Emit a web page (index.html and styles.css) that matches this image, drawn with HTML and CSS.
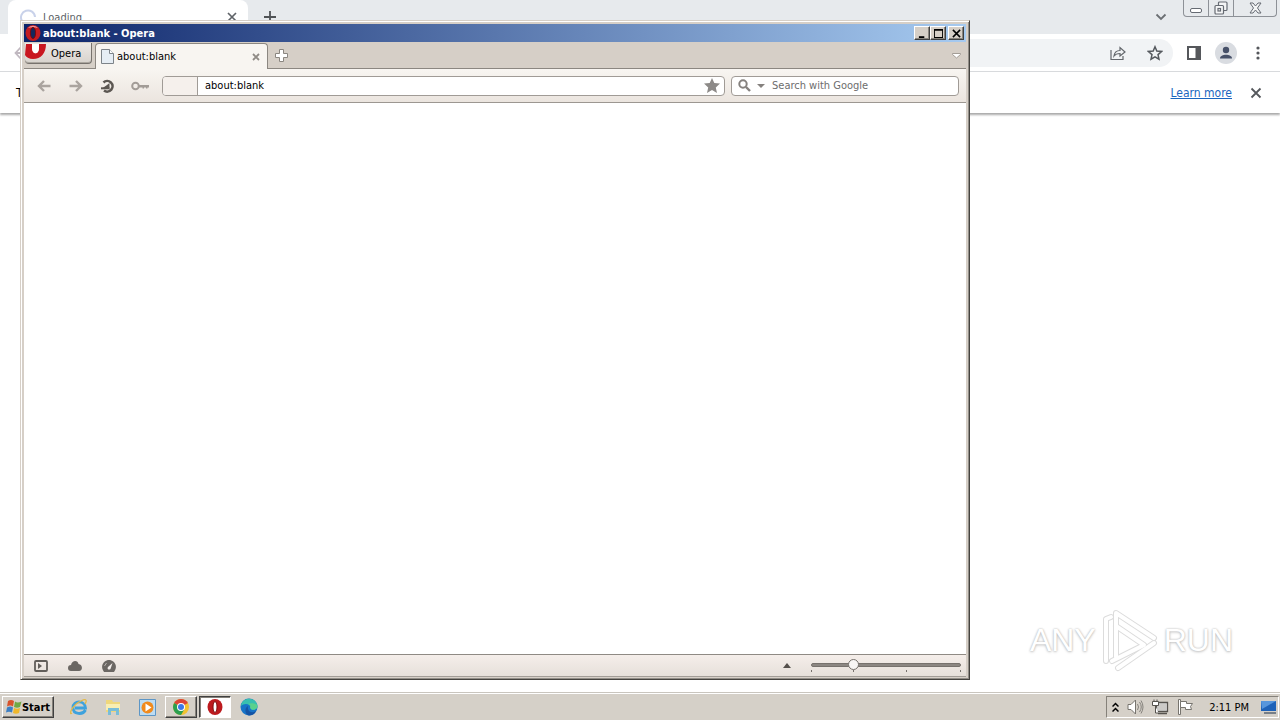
FILE: index.html
```html
<!DOCTYPE html>
<html lang="en">
<head>
<meta charset="utf-8">
<title>Desktop</title>
<link rel="stylesheet" href="styles.css">
</head>
<body>
<div class="screen">
  <main class="desktop">
    <section class="browser" aria-label="Browser">
      <header class="tabstrip">
        <div class="btab">
          <svg class="spinner" width="16" height="16" viewBox="0 0 16 16"><path d="M2 12A7 7 0 1 1 15 8" fill="none" stroke="#c9d2ea" stroke-width="2"/></svg>
          <span class="btab-title">Loading</span>
          <button class="plain" aria-label="Close tab"><svg width="10" height="10" viewBox="0 0 10 10"><path d="M1 1l8 8M9 1L1 9" stroke="#5f6368" stroke-width="1.7"/></svg></button>
        </div>
        <button class="plain newtab" aria-label="New tab"><svg width="12" height="12" viewBox="0 0 12 12"><path d="M6 0v12M0 6h12" stroke="#505356" stroke-width="1.8"/></svg></button>
        <button class="plain tabsearch" aria-label="Search tabs"><svg width="12" height="8" viewBox="0 0 12 8"><path d="M1.500 1.500L6 6l4.500-4.500" fill="none" stroke="#6b6f73" stroke-width="1.8"/></svg></button>
        <div class="wincontrols">
          <button aria-label="Minimize window"><svg width="14" height="14" viewBox="0 0 14 14"><rect x="1.500" y="7.500" width="11" height="4" rx="1.500" fill="#fff" stroke="#666b73"/></svg></button>
          <button aria-label="Restore window"><svg width="14" height="14" viewBox="0 0 14 14"><g fill="#f4f5f6" stroke="#666b73" stroke-width="1.200"><rect x="4.500" y="1" width="8.500" height="8.500" rx="1"/><rect x="1" y="4.500" width="8.500" height="8.500" rx="1"/><rect x="4" y="7.500" width="2.500" height="2.500"/></g></svg></button>
          <button class="wide" aria-label="Close window"><svg width="13" height="12" viewBox="0 0 13 12"><path d="M1 1h3l2.500 3L9 1h3L8.500 6l3.500 5H9L6.500 8 4 11H1l3.500-5z" fill="#f4f5f6" stroke="#666b73"/></svg></button>
        </div>
      </header>
      <div class="btoolbar">
        <button class="plain back" aria-label="Back"><svg width="14" height="14" viewBox="0 0 14 14"><path d="M13 7H2M7 1L1.500 7 7 13" fill="none" stroke="#c0b8c0" stroke-width="1.800"/></svg></button>
        <div class="omnibox">
          <button class="plain" aria-label="Share"><svg width="16" height="16" viewBox="0 0 16 16"><path d="M1 5v9.500h12V11M4 11c.5-4 3-5.500 6-5.500V2.500L15 7l-5 4V8.500c-3 0-4.500.5-6 2.500z" fill="none" stroke="#63676c" stroke-width="1.200"/></svg></button>
          <button class="plain" aria-label="Bookmark"><svg width="16" height="16" viewBox="0 0 16 16"><path d="M8 1.800l1.800 4.300 4.700.4-3.500 3.100 1 4.600L8 11.800l-4 2.400 1-4.600L1.500 6.500l4.700-.4z" fill="none" stroke="#55595e" stroke-width="1.500"/></svg></button>
        </div>
        <button class="plain" aria-label="Side panel"><svg width="14" height="14" viewBox="0 0 14 14"><path d="M0 0h14v14H0zM2 2v10h6.500V2z" fill="#55575b" fill-rule="evenodd"/></svg></button>
        <button class="plain" aria-label="Profile"><svg width="22" height="22" viewBox="0 0 22 22"><circle cx="11" cy="11" r="11" fill="#d9dce1"/><circle cx="11" cy="8" r="3.200" fill="#475169"/><path d="M5 16.500c0-5 12-5 12 0z" fill="#475169"/></svg></button>
        <button class="plain" aria-label="Menu"><svg width="4" height="14" viewBox="0 0 4 14"><g fill="#55575b"><circle cx="2" cy="2" r="1.600"/><circle cx="2" cy="7" r="1.600"/><circle cx="2" cy="12" r="1.600"/></g></svg></button>
      </div>
      <div class="infobar">
        <span class="infotext">T</span>
        <a class="learn" href="#">Learn more</a>
        <button class="plain" aria-label="Dismiss"><svg width="12" height="12" viewBox="0 0 12 12"><path d="M1.500 1.500l9 9M10.500 1.500l-9 9" stroke="#55585c" stroke-width="1.800"/></svg></button>
      </div>
      <div class="page"></div>
    </section>

    <section class="opera" aria-label="Opera">
      <header class="titlebar">
        <svg width="16" height="16" viewBox="0 0 16 16"><ellipse cx="8" cy="8" rx="7.500" ry="8" fill="#c41d22"/><path d="M3 3c3-3 7-3 10 0-3-1-7-1-10 0z" fill="#ef9999"/><ellipse cx="8" cy="8" rx="2.600" ry="5.600" fill="#14285c" stroke="#7c090d"/></svg>
        <h1 class="title">about:blank - Opera</h1>
        <button class="cap" aria-label="Minimize"><svg width="10" height="10" viewBox="0 0 10 10"><path d="M1 8h6v2H1z"/></svg></button>
        <button class="cap" aria-label="Maximize"><svg width="10" height="10" viewBox="0 0 10 10"><path d="M0 0h10v10H0zM1 2v7h8V2z" fill-rule="evenodd"/></svg></button>
        <button class="cap cap-close" aria-label="Close"><svg width="10" height="10" viewBox="0 0 10 10"><path d="M1 1l8 8M9 1L1 9" stroke="#000" stroke-width="1.700"/></svg></button>
      </header>
      <nav class="optabs">
        <button class="menu"><svg width="22" height="17" viewBox="0 0 22 17"><path d="M1 1h6v4c0 7 7 7 7 0V1h7C21 10 16 16 8 16 4 16 1 14 0 12z" fill="#c91720"/><path d="M7 1h7v4c0 7-7 7-7 0z" fill="#fff"/></svg><span>Opera</span></button>
        <div class="optab">
          <svg width="13" height="15" viewBox="0 0 13 15"><path d="M.5.500h8l4 4v10H.5z" fill="#e6edf4" stroke="#7d8389"/><path d="M8.500.500v4h4" fill="#fff" stroke="#7d8389"/></svg>
          <span class="optab-title">about:blank</span>
          <button class="plain" aria-label="Close tab"><svg width="8" height="8" viewBox="0 0 8 8"><path d="M1 1l6 6M7 1L1 7" stroke="#908b86" stroke-width="1.800"/></svg></button>
        </div>
        <button class="plain opnew" aria-label="New tab"><svg width="13" height="13" viewBox="0 0 13 13"><path d="M4.500.500h4v4h4v4h-4v4h-4v-4h-4v-4h4z" fill="#fff" stroke="#8b8680"/></svg></button>
        <button class="plain closed" aria-label="Closed tabs"><svg width="9" height="7" viewBox="0 0 9 7"><path d="M.5 1.500h8v1l-4 3.500-4-3.500z" fill="#fff" stroke="#a39d96"/></svg></button>
      </nav>
      <div class="optoolbar">
        <button class="plain tool" aria-label="Back"><svg width="14" height="12" viewBox="0 0 14 12"><path d="M13.500 6H2M7 1L2 6l5 5" fill="none" stroke="#aaa49f" stroke-width="2.400"/></svg></button>
        <button class="plain tool" aria-label="Forward"><svg width="14" height="12" viewBox="0 0 14 12"><path d="M.5 6H12M7 1l5 5-5 5" fill="none" stroke="#aaa49f" stroke-width="2.400"/></svg></button>
        <button class="plain tool" aria-label="Reload"><svg width="14" height="14" viewBox="0 0 14 14"><path d="M2.500 3.500A5.300 5.300 0 1 1 3 11.500" fill="none" stroke="#5c5752" stroke-width="2.600"/><path d="M1 9.500h7.500V4L6 6z" fill="#5c5752"/><path d="M0 8.300h8.500v2H0z" fill="#5c5752"/></svg></button>
        <button class="plain tool" aria-label="Wand"><svg width="18" height="10" viewBox="0 0 18 10"><circle cx="4.500" cy="5" r="3.300" fill="none" stroke="#a29c97" stroke-width="2"/><path d="M8 4h10v2.500h-1.500V7.500H15V6.500h-2v1h-1.500v-1H8z" fill="#a29c97"/></svg></button>
        <div class="address">
          <span class="badge"></span>
          <input class="field" type="text" aria-label="Address" value="about:blank">
          <button class="plain" aria-label="Bookmark page"><svg width="16" height="15" viewBox="0 0 16 15"><path d="M8 0l2.300 5 5.700.6-4.200 3.800L13 15l-5-2.900L3 15l1.200-5.600L0 5.600 5.700 5z" fill="#8d8a88"/></svg></button>
        </div>
        <div class="search">
          <button class="plain" aria-label="Search engine"><svg width="27" height="13" viewBox="0 0 27 13"><circle cx="5" cy="5" r="3.700" fill="none" stroke="#85817e" stroke-width="2"/><path d="M8 8l4 4" stroke="#85817e" stroke-width="2.400"/><path d="M19 5h8l-4 4z" fill="#85817e"/></svg></button>
          <input class="field" type="text" aria-label="Search" placeholder="Search with Google">
        </div>
      </div>
      <div class="opview"></div>
      <footer class="status">
        <button class="plain" aria-label="Panels"><svg width="14" height="12" viewBox="0 0 14 12"><rect x="1" y="1" width="12" height="10" rx="1" fill="none" stroke="#625e5a" stroke-width="1.800"/><path d="M4 3l4 3-4 3z" fill="#625e5a"/></svg></button>
        <button class="plain" aria-label="Opera Link"><svg width="14" height="10" viewBox="0 0 14 10"><path d="M3 10a3 3 0 0 1 0-6c1-5 7-5 7.500-1C15 3.500 15 10 11 10z" fill="#6b6763"/></svg></button>
        <button class="plain" aria-label="Opera Turbo"><svg width="14" height="12" viewBox="0 0 14 12"><path d="M2 12C-3 5 3 0 7 0s10 5 5 12z" fill="#6b6763"/><path d="M10.500 3L8.500 9C7 10.500 4.500 9 6 7z" fill="#f3eeeb"/><path d="M2.500 6l2-3" stroke="#b9b4b0"/></svg></button>
        <button class="plain viewmenu" aria-label="View options"><svg width="8" height="5" viewBox="0 0 8 5"><path d="M0 5l4-5 4 5z" fill="#55504c"/></svg></button>
        <div class="zoom">
          <input class="range" type="range" aria-label="Zoom" min="0" max="100" value="26">
          <div class="ticks"><i></i><i></i><i></i><i></i></div>
        </div>
      </footer>
    </section>

    <div class="mark">
      <span>ANY</span>
      <svg width="60" height="66" viewBox="0 0 60 66"><g fill="none" stroke-linejoin="round" stroke-linecap="round"><g stroke="#dcdcdc" stroke-width="6"><path d="M6 54V12l5-2"/><path d="M16 50V6l38 25"/><path d="M16 19l28 19L12 54"/><path d="M18 61l36-25"/></g><g stroke="#fff" stroke-width="4"><path d="M6 54V12l5-2"/><path d="M16 50V6l38 25"/><path d="M16 19l28 19L12 54"/><path d="M18 61l36-25"/></g></g></svg>
      <span>RUN</span>
    </div>
  </main>

  <footer class="taskbar">
    <button class="start"><svg width="16" height="16" viewBox="0 0 16 16"><path d="M2 2c2-1.500 4-1.500 6 0L7 7.500c-2-1.500-4-1-6 0z" fill="#d8532b"/><path d="M9 2.500c2 1.500 4 1 6.500 0L14 8c-2 1-4 1-6 0z" fill="#6fa944"/><path d="M1 8.500c2-1 4-1.500 6 0l-1 5c-2-1-4-1-6 0z" fill="#3c7fc4"/><path d="M8 9c2 1 4 1 6 0l-1 5c-2 1-4 1-6 0z" fill="#efb72b"/></svg>Start</button>
    <button class="task first" aria-label="Internet Explorer"><svg width="18" height="18" viewBox="0 0 18 18"><path d="M15.500 12C13 17 3 17 3 9.500S15 2 15.500 10H5" fill="none" stroke="#3ea2dd" stroke-width="2.800"/><path d="M2 15C-2 18 2 7 11 3c6-3 6 0 4 3" fill="none" stroke="#e3b948" stroke-width="1.300"/></svg></button>
    <button class="task" aria-label="Explorer"><svg width="18" height="18" viewBox="0 0 18 18"><path d="M2 2h6l1 2h7v10H2z" fill="#efd77c"/><path d="M2 6h14v6H2z" fill="#f9eeb2"/><path d="M4 10h11v7h-3v-4H7v4H4z" fill="#79bdd8"/></svg></button>
    <button class="task" aria-label="Media Player"><svg width="17" height="17" viewBox="0 0 17 17"><path d="M.5.500h16v16H.5z" fill="#bddcf2" stroke="#5d96c6"/><circle cx="8.500" cy="8.500" r="6" fill="#f18a1c"/><path d="M6.500 4.500l6 4-6 4z" fill="#fff"/></svg></button>
    <button class="task raised" aria-label="Chrome"><svg width="16" height="16" viewBox="0 0 16 16"><circle cx="8" cy="8" r="8" fill="#f2c230"/><path d="M8 8L1.100 4A8 8 0 0 1 14.900 4z" fill="#dc4437"/><path d="M8 8L1.100 4A8 8 0 0 0 8 16l3-5z" fill="#2c9f50"/><circle cx="8" cy="8" r="4" fill="#fff"/><circle cx="8" cy="8" r="3" fill="#3c78e7"/></svg></button>
    <button class="task pressed" aria-label="Opera"><svg width="16" height="16" viewBox="0 0 16 16"><ellipse cx="8" cy="8" rx="7.500" ry="8" fill="#bd1a1e"/><ellipse cx="8" cy="8" rx="2" ry="5.500" fill="#fff" stroke="#7d0c0e"/></svg></button>
    <button class="task" aria-label="Edge"><svg width="18" height="18" viewBox="0 0 18 18"><circle cx="9" cy="9" r="8.500" fill="#1673c7"/><path d="M1 8C2-2 17-1 17.500 8c0 5-7 5-7 2 0-5-7-5-9.500-2z" fill="#38bfb0"/><path d="M8 8c-1 5 3 8 8 5-1 3-4 4.500-7 4.500C5 17 4 10 8 8z" fill="#1553a4"/><path d="M10 9c1-1 0-3-2-3 4-2 9 0 9.500 2 0 4-7 5-7.500 1z" fill="#5ad18d"/></svg></button>
    <div class="tray">
      <svg width="7" height="11" viewBox="0 0 7 11"><path d="M.5 4.500l3-3 3 3M.5 9.500l3-3 3 3" fill="none" stroke="#000" stroke-width="1.500"/></svg>
      <svg width="17" height="16" viewBox="0 0 17 16"><path d="M1 5.500h3L8.500 1v14L4 10.500H1z" fill="#fff" stroke="#77746e"/><path d="M10.500 5q2 3 0 6M12.500 3q3.500 5 0 10M14 1.500q4 6.500 0 13" fill="none" stroke="#85827c"/></svg>
      <svg width="17" height="16" viewBox="0 0 17 16"><path d="M4.500 3.500h11v9h-11z" fill="#ddd" stroke="#56534e" stroke-width="1.300"/><path d="M6 6h8M6 8h8M6 10h8" stroke="#bbb8b2"/><path d="M6 14.500h9" stroke="#56534e" stroke-width="1.500"/><path d="M.5 2.500h6v4h-6zM2 .5v2m3-2v2M3.500 7v7h3" fill="#fff" stroke="#56534e"/></svg>
      <svg width="17" height="16" viewBox="0 0 17 16"><path d="M1.500.5h2v15h-2z" fill="#fff" stroke="#77746e"/><path d="M3.500 2.500h6v2h6l-2 3 1 3H8.500v-2h-5z" fill="#fff" stroke="#77746e"/></svg>
      <time class="clock">2:11 PM</time>
      <svg width="17" height="15" viewBox="0 0 17 15"><path d="M1 1h15v10H1z" fill="#1e62b8"/><path d="M1 1h15L2 9z" fill="#5796dc"/><path d="M4 13h12" stroke="#777f88" stroke-width="2"/></svg>
    </div>
  </footer>
</div>
</body>
</html>
```
FILE: styles.css
```css
* { box-sizing: border-box; }
body {
  margin: 0;
  font-family: "DejaVu Sans Condensed", "DejaVu Sans", sans-serif;
  font-size: 11px;
  color: #000;
}
svg { display: block; flex: none; }
button { font: inherit; color: inherit; padding: 0; border-radius: 0; }
.plain { border: 0; background: none; display: flex; align-items: center; justify-content: center; }
.screen { height: 100vh; display: flex; flex-direction: column; background: #fff; }
.desktop { flex: 1; position: relative; min-height: 0; }

/* Background browser */
.browser { height: 100%; display: flex; flex-direction: column; }
.tabstrip { height: 34px; display: flex; align-items: center; background: #e7eaed; padding: 0 3px 0 8px; }
.btab { width: 240px; height: 34px; background: #fff; border-radius: 8px 8px 0 0; display: flex; align-items: center; gap: 7px; padding: 0 11px 0 12px; }
.btab-title { flex: 1; color: #5b5f66; }
.newtab { margin-left: 16px; }
.tabsearch { margin-left: auto; margin-right: 16px; }
.wincontrols { display: flex; align-self: flex-start; height: 17px; border: 1px solid #8d9197; border-top: 0; border-radius: 0 0 4px 4px; }
.wincontrols button { width: 25px; border: 0; border-right: 1px solid #8d9197; background: none; display: flex; align-items: center; justify-content: center; }
.wincontrols .wide { width: 42px; border-right: 0; }
.btoolbar { height: 37px; display: flex; align-items: center; gap: 14px; padding: 0 20px 0 14px; background: #fff; }
.omnibox { flex: 1; height: 28px; border-radius: 14px; background: #f1f3f5; display: flex; align-items: center; justify-content: flex-end; gap: 16px; padding-right: 10px; }
.btoolbar .plain:last-child { margin-left: 5px; }
.infobar { height: 42px; display: flex; align-items: center; padding: 0 18px 0 16px; background: #fff; border-top: 1px solid #d8dadd; box-shadow: 0 2px 2px #aaa; }
.infotext { flex: 1; font-size: 12px; }
.learn { color: #1a66c0; font-size: 12px; margin-right: 18px; }
.page { flex: 1; }

/* Opera window */
.opera {
  position: absolute; top: 20px; left: 20px; right: 310px; bottom: 12px;
  display: flex; flex-direction: column;
  padding: 3px 3px 2px; background: #d6cfc7;
  border: 1px solid; border-color: #d6cfc7 #45433f #45433f #d6cfc7;
  box-shadow: inset 1px 1px #fff, inset -1px -1px #918d87;
}
.titlebar { height: 18px; display: flex; align-items: center; gap: 2px; padding: 0 2px 0 1px; background: linear-gradient(90deg, #0c246a, #a6caf0); }
.title { margin: 0; flex: 1; font-size: 11px; font-weight: bold; color: #fff; }
.cap { width: 16px; height: 14px; margin-left: -2px; display: flex; align-items: center; justify-content: center; background: #d6cfc7; border: 1px solid; border-color: #fff #404040 #404040 #fff; box-shadow: inset -1px -1px #8a857e; }
.cap-close { margin-left: 0; }
.cap svg { width: 9px; height: 9px; }
.optabs { height: 27px; display: flex; background: #d6cfc7; border-bottom: 1px solid #8c8781; padding: 1px 5px 0 1px; }
.menu { width: 67px; height: 21px; display: flex; gap: 4px; line-height: 22px; border: 1px solid #77726d; border-top: 0; border-left: 0; border-radius: 0 0 4px 4px; background: linear-gradient(#ece9e6, #d8d3cd); box-shadow: inset 0 -1px #aba69f; }
.optab { width: 173px; height: 26px; margin-left: 3px; display: flex; align-items: center; gap: 3px; padding: 0 7px 0 5px; border: 1px solid #8c8781; border-bottom: 0; border-radius: 4px 4px 0 0; background: #f8f5f1; }
.optab-title { flex: 1; }
.opnew { margin-left: 7px; }
.closed { margin-left: auto; }
.optoolbar { height: 34px; display: flex; align-items: center; padding: 0 7px 0 4px; background: linear-gradient(#f8f5f1, #ebe5df); border-bottom: 1px solid #9c9791; }
.tool { width: 32px; }
.address, .search { height: 20px; display: flex; align-items: center; background: #fff; border: 1px solid #a09b96; border-radius: 4px; }
.address { flex: 1; margin-left: 6px; padding-right: 4px; overflow: hidden; }
.badge { width: 35px; height: 18px; background: #f5f0ec; border-right: 1px solid #a09b96; }
.field { flex: 1; min-width: 0; height: 18px; border: 0; outline: 0; padding: 0 7px; background: none; font: inherit; color: #000; }
.field::placeholder { color: #6d6d6d; opacity: 1; }
.search { width: 228px; margin-left: 6px; padding-left: 6px; }
.opview { flex: 1; background: #fff; }
.status { height: 23px; display: flex; align-items: center; gap: 20px; padding: 0 5px 0 10px; background: linear-gradient(#f5eeea, #e6e0da); border-top: 1px solid #8f8a84; border-bottom: 1px solid #a29d97; }
.viewmenu { margin-left: auto; }
.zoom { width: 150px; height: 14px; position: relative; }
.range { position: relative; z-index: 1; appearance: none; width: 100%; height: 12px; margin: 0; background: none; display: block; }
.range::-webkit-slider-runnable-track { height: 4px; background: #8c8782; border: 1px solid #77726d; border-radius: 2px; }
.range::-webkit-slider-thumb { appearance: none; width: 11px; height: 11px; margin-top: -5px; border: 1px solid #77726d; border-radius: 50%; background: #f8f6f4; }
.ticks { position: absolute; left: 0; right: 0; bottom: 1px; display: grid; grid-template-columns: 42px 53px 1fr 1px; }
.ticks i { width: 1px; height: 2px; background: #77726d; }

.mark { position: absolute; right: 47px; bottom: 19px; display: flex; align-items: center; gap: 4px; color: #fff; font-family: "Liberation Sans", Arial, sans-serif; font-size: 32px; text-shadow: 0 0 2px #b4b4b4, 0 1px 3px #ccc; }

/* Taskbar */
.taskbar { height: 28px; display: flex; align-items: center; padding: 1px 1px 0 2px; background: #d5d0c8; border-top: 1px solid #c9c5be; box-shadow: inset 0 1px #fff; }
.start { width: 52px; height: 22px; display: flex; align-items: center; justify-content: center; font-weight: bold; background: #d5d0c8; border: 1px solid; border-color: #fff #404040 #404040 #fff; box-shadow: inset -1px -1px #85817a; }
.task { width: 32px; height: 22px; margin-right: 2px; display: flex; align-items: center; justify-content: center; border: 1px solid transparent; background: none; }
.first { margin-left: 9px; }
.raised { border-color: #fff #404040 #404040 #fff; box-shadow: inset -1px -1px #85817a; }
.pressed { border-color: #404040 #fff #fff #404040; background: #fff; box-shadow: inset 1px 1px #85817a; }
.tray { height: 22px; margin-left: auto; display: flex; align-items: center; gap: 8px; padding: 0 1px 0 5px; border: 1px solid; border-color: #85817a #fff #fff #85817a; }
.clock { margin: 0 3px 0 7px; }
```
